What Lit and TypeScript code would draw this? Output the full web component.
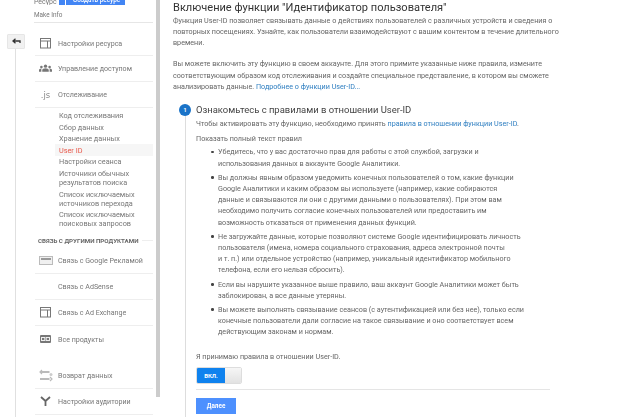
import { LitElement, html, css } from "lit";
import { customElement } from "lit/decorators.js";

@customElement("app-root")
export class AppRoot extends LitElement {
  static styles = css`
    :host { display: block; width: 629px; height: 417px; overflow: hidden; background: #fff; font-family: Roboto, "Liberation Sans", sans-serif; color: #555; }
    a { color: #2f7fc1; text-decoration: none; }
    .page { display: flex; height: 417px; filter: blur(0.3px); }
    .rail { width: 16px; flex: none; border-right: 1px solid #e0e0e0; margin-top: 34px; position: relative; box-sizing: border-box; }
    .back { position: absolute; left: 7px; top: 0; width: 18px; height: 15px; background: #f1f1f1; border: 1px solid #e6e6e6; box-sizing: border-box; border-radius: 1px; display: flex; align-items: center; justify-content: center; }
    .side { width: 140px; flex: none; box-sizing: border-box; padding-left: 18px; height: 417px; overflow: hidden; }
    .topbar { display: flex; align-items: center; height: 5px; margin-bottom: 5px; overflow: hidden; }
    .top { width: 25px; flex: none; font-size: 7px; line-height: 5px; color: #777; }
    .create { width: 66px; height: 5px; flex: none; background: #4285f4; color: #fff; font-size: 6.4px; font-weight: 500; line-height: 1px; display: flex; gap: 7px; padding-left: 6px; box-sizing: border-box; white-space: nowrap; }
    .create i { display: block; width: 1px; height: 5px; background: #fff; }
    .info { height: 11px; line-height: 11px; font-size: 6.4px; color: #777; }
    .divider { height: 1px; background: #e6e6e6; width: 119px; margin-top: 1px; margin-bottom: 1px; }
    .item { display: flex; align-items: center; height: 26px; border-bottom: 1px solid #eee; box-sizing: border-box; width: 118px; margin-left: 1px; font-size: 7.1px; color: #777; white-space: nowrap; }
    .first { height: 32px; padding-top: 7px; }
    .products { height: 37px; align-items: flex-start; padding-top: 9px; border-bottom: 0; }
    .ico { width: 23px; flex: none; padding-right: 2px; box-sizing: border-box; display: flex; justify-content: center; align-items: center; }
    .ico svg { display: block; }
    .js { font-size: 8.5px; color: #888; font-family: "DejaVu Sans", sans-serif; }
    .sub { padding-top: 1.7px; }
    .sub div { font-size: 7.3px; line-height: 9px; color: #777; padding: 1.3px 0 1.3px 4px; width: 98px; box-sizing: border-box; margin-left: 21px; }
    .sub .on { color: #e8574a; background: #f6f6f6; }
    .section { display: flex; align-items: center; gap: 4px; font-size: 6.2px; font-weight: 700; color: #666; margin-top: 5.5px; height: 12px; margin-bottom: 0.7px; white-space: nowrap; width: 115px; margin-left: 4px; }
    .section i { display: block; flex: 1; height: 1px; background: #eee; }
    .main { flex: 1; min-width: 0; border-left: 4px solid #ccc; height: 397px; padding-left: 13px; }
    .content { height: 417px; overflow: hidden; width: 456px; }
    h1 { margin: 0.5px 0 0; font-size: 11.05px; line-height: 14px; font-weight: 400; color: #333; white-space: nowrap; }
    p { margin: 0; font-size: 7.2px; line-height: 11.3px; color: #666; white-space: nowrap; }
    .intro + .intro { margin-top: 9.9px; }
    .step { display: flex; margin-top: 11.75px; margin-left: 6px; position: relative; }
    .num { position: absolute; left: 0; top: 0; width: 12px; height: 12px; border-radius: 50%; background: #1a73c8; color: #fff; font-size: 5.5px; font-weight: 700; display: flex; align-items: center; justify-content: center; }
    .line { width: 12px; flex: none; display: flex; justify-content: center; }
    .line::before { content: ""; display: block; width: 1px; background: #ddd; height: 320px; }
    .body { padding-left: 5px; width: 420px; }
    h2 { margin: 0; font-size: 9.45px; line-height: 12px; font-weight: 400; color: #444; white-space: nowrap; }
    .lead { margin-top: 2.35px; }
    .show { margin-top: 3.7px; }
    ul { margin: 1.75px 0 0; padding: 0 0 0 22px; list-style: none; }
    li { position: relative; font-size: 7.2px; line-height: 11.2px; color: #666; margin-bottom: 3px; white-space: nowrap; }
    li::before { content: ""; position: absolute; left: -7px; top: 4.5px; width: 2.5px; height: 2.5px; border-radius: 50%; background: #444; }
    .accept { margin-top: 13px; }
    .toggle { display: flex; width: 46px; height: 17px; margin-top: 5.35px; border-radius: 2px; overflow: hidden; border: 1px solid #ddd; box-sizing: border-box; }
    .toggle b { width: 28px; background: #0f82ee; color: #fff; font-size: 6px; display: flex; align-items: center; justify-content: center; }
    .toggle span { flex: 1; background: linear-gradient(#f6f6f6, #e2e2e2); }
    .rule { height: 1px; background: #e5e5e5; width: 354px; margin-top: 5px; }
    .next { margin-top: 8px; width: 40px; height: 16px; background: #4d90fe; color: #fff; font-size: 6.4px; font-weight: 700; display: flex; align-items: center; justify-content: center; }
  `;

  private icon(kind: string) {
    switch (kind) {
      case "box":
        return html`<svg width="11" height="11" viewBox="0 0 11 11" fill="none" stroke="#777"><rect x=".5" y=".5" width="10" height="9.5"/><path d="M.5 3h10M7.5 3v7"/></svg>`;
      case "people":
        return html`<svg width="13" height="9" viewBox="0 0 14 9" fill="#777"><circle cx="7" cy="2" r="1.8"/><circle cx="2.6" cy="3" r="1.4"/><circle cx="11.4" cy="3" r="1.4"/><path d="M3.5 8V6c0-1 2-1.800 3.500-1.800S10.500 5 10.500 6v2zM0 8V6c0-.8 1-1.300 2.500-1.300v3.300zM14 8V6c0-.8-1-1.300-2.500-1.300v3.300z"/></svg>`;
      case "ads":
        return html`<svg width="14" height="9" viewBox="0 0 14 9"><rect x=".5" y=".5" width="13" height="8" fill="#f0f0f0" stroke="#bbb"/><rect x="2" y="2" width="10" height="2" fill="#999"/></svg>`;
      case "link":
        return html`<svg width="11" height="8" viewBox="0 0 11 8"><rect width="11" height="8" rx="1" fill="#777"/><rect x="1.5" y="2.5" width="3.3" height="3" fill="none" stroke="#eee"/><rect x="6.2" y="2.5" width="3.3" height="3" fill="none" stroke="#eee"/></svg>`;
      case "swap":
        return html`<svg width="14" height="13" viewBox="0 0 14 13" fill="none" stroke="#bbb" stroke-width="1.8"><path d="M1 3h9.500M1 10h9.500"/><path d="M3 1L1 3l2 2M11 8l2 2-2 2" stroke-width="1.2"/><circle cx="12" cy="5.5" r="1.5" fill="#ccc" stroke="none"/></svg>`;
      case "fork":
        return html`<svg width="11" height="10" viewBox="0 0 11 10" fill="none" stroke="#666" stroke-width="1.8"><path d="M1 1l4.500 4v5M10 1L5.500 5"/></svg>`;
      default:
        return html``;
    }
  }

  render() {
    return html`
      <div class="page">
        <div class="rail">
          <div class="back">
            <svg width="9" height="7" viewBox="0 0 9 7" fill="none" stroke="#333" stroke-width="1.3"><path d="M3.500 .8L1 3l2.500 2.200M1 3h7v2"/></svg>
          </div>
        </div>
        <nav class="side">
          <div class="topbar"><span class="top">Ресурс</span><span class="create"><i></i>Создать ресурс</span></div>
          <div class="info">Make Info</div>
          <div class="divider"></div>
          <div class="item first"><span class="ico">${this.icon("box")}</span>Настройки ресурса</div>
          <div class="item"><span class="ico">${this.icon("people")}</span>Управление доступом</div>
          <div class="item"><span class="ico js">.js</span>Отслеживание</div>
          <div class="sub">
            <div>Код отслеживания</div>
            <div>Сбор данных</div>
            <div>Хранение данных</div>
            <div class="on">User ID</div>
            <div>Настройки сеанса</div>
            <div>Источники обычных результатов поиска</div>
            <div>Список исключаемых источников перехода</div>
            <div>Список исключаемых поисковых запросов</div>
          </div>
          <div class="section">СВЯЗЬ С ДРУГИМИ ПРОДУКТАМИ<i></i></div>
          <div class="item"><span class="ico">${this.icon("ads")}</span>Связь с Google Рекламой</div>
          <div class="item"><span class="ico"></span>Связь с AdSense</div>
          <div class="item"><span class="ico">${this.icon("box")}</span>Связь с Ad Exchange</div>
          <div class="item products"><span class="ico">${this.icon("link")}</span>Все продукты</div>
          <div class="item"><span class="ico">${this.icon("swap")}</span>Возврат данных</div>
          <div class="item"><span class="ico">${this.icon("fork")}</span>Настройки аудитории</div>
        </nav>
        <main class="main">
          <div class="content">
            <h1>Включение функции "Идентификатор пользователя"</h1>
            <p class="intro">Функция User-ID позволяет связывать данные о действиях пользователей с различных устройств и сведения о<br>повторных посещениях. Узнайте, как пользователи взаимодействуют с вашим контентом в течение длительного<br>времени.</p>
            <p class="intro">Вы можете включить эту функцию в своем аккаунте. Для этого примите указанные ниже правила, измените<br>соответствующим образом код отслеживания и создайте специальное представление, в котором вы сможете<br>анализировать данные. <a>Подробнее о функции User-ID...</a></p>
            <div class="step">
              <span class="num">1</span>
              <div class="line"></div>
              <div class="body">
                <h2>Ознакомьтесь с правилами в отношении User-ID</h2>
                <p class="lead">Чтобы активировать эту функцию, необходимо принять <a>правила в отношении функции User-ID</a>.</p>
                <p class="show">Показать полный текст правил</p>
                <ul>
                  <li>Убедитесь, что у вас достаточно прав для работы с этой службой, загрузки и<br>использования данных в аккаунте Google Аналитики.</li>
                  <li>Вы должны явным образом уведомить конечных пользователей о том, какие функции<br>Google Аналитики и каким образом вы используете (например, какие собираются<br>данные и связываются ли они с другими данными о пользователях). При этом вам<br>необходимо получить согласие конечных пользователей или предоставить им<br>возможность отказаться от применения данных функций.</li>
                  <li>Не загружайте данные, которые позволяют системе Google идентифицировать личность<br>пользователя (имена, номера социального страхования, адреса электронной почты<br>и т. п.) или отдельное устройство (например, уникальный идентификатор мобильного<br>телефона, если его нельзя сбросить).</li>
                  <li>Если вы нарушите указанное выше правило, ваш аккаунт Google Аналитики может быть<br>заблокирован, а все данные утеряны.</li>
                  <li>Вы можете выполнять связывание сеансов (с аутентификацией или без нее), только если<br>конечные пользователи дали согласие на такое связывание и оно соответствует всем<br>действующим законам и нормам.</li>
                </ul>
                <p class="accept">Я принимаю правила в отношении User-ID.</p>
                <div class="toggle"><b>ВКЛ.</b><span></span></div>
                <div class="rule"></div>
                <div class="next">Далее</div>
              </div>
            </div>
          </div>
        </main>
      </div>
    `;
  }
}
